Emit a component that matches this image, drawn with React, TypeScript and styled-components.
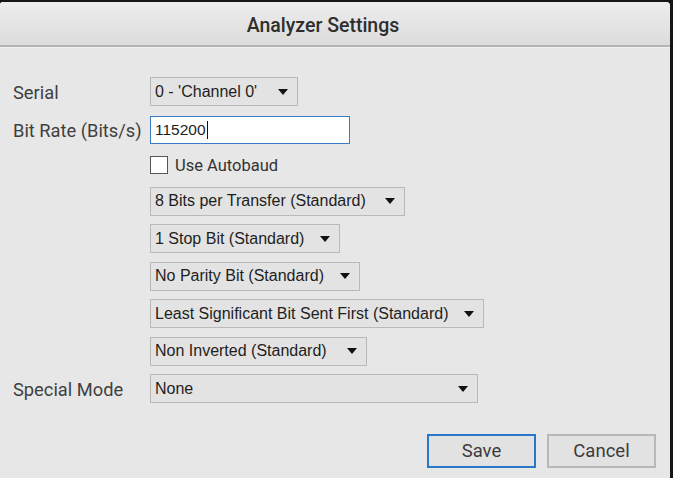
import React from "react";
import styled, { createGlobalStyle } from "styled-components";

const Global = createGlobalStyle`
  html, body { margin: 0; padding: 0; background: #161616; }
  body { width: 673px; height: 478px; overflow: hidden; }
  #root { width: 673px; height: 478px; }
`;

const Window = styled.div`
  box-sizing: border-box;
  margin-top: 2px;
  width: 670px;
  height: 476px;
  background: #e7e7e7;
  border-top-left-radius: 3px;
  border-top-right-radius: 4px;
  display: flex;
  flex-direction: column;
  overflow: hidden;
`;

const TitleBar = styled.div`
  box-sizing: border-box;
  height: 45px;
  flex: none;
  display: flex;
  align-items: center;
  justify-content: center;
  padding: 3px 24px 0 0;
  background: linear-gradient(#ededed, #dcdcdc);
  border-bottom: 2px solid #b4b4b4;
  box-shadow: 0 1px 0 #f2f2f2;
  font-family: Roboto, "Liberation Sans", sans-serif;
  font-weight: 500;
  font-size: 19.5px;
  color: #2e2e2e;
`;

const Body = styled.div`
  flex: 1;
  display: flex;
  flex-direction: column;
  padding: 30px 14px 0 13px;
`;

const Form = styled.div`
  display: grid;
  grid-template-columns: 137px 1fr;
  row-gap: 8.5px;
`;

const Label = styled.div`
  display: flex;
  align-items: center;
  padding-top: 2px;
  font-family: Roboto, "Liberation Sans", sans-serif;
  font-size: 18.3px;
  color: #3f3f3f;
  white-space: nowrap;
`;

const Cell = styled.div<{ $h?: number }>`
  grid-column: 2;
  display: flex;
  align-items: center;
  height: ${(p) => p.$h ?? 29}px;
`;

const Combo = styled.div<{ $w: number }>`
  box-sizing: border-box;
  width: ${(p) => p.$w}px;
  height: 29px;
  display: flex;
  align-items: center;
  justify-content: space-between;
  padding: 0 9px 0 4px;
  background: #e3e3e3;
  border: 1px solid #b9b9b9;
  font-family: "Liberation Sans", Arial, sans-serif;
  font-size: 16px;
  color: #1e1e1e;
  white-space: nowrap;
`;

const Arrow = styled.span`
  width: 0;
  height: 0;
  border-left: 5px solid transparent;
  border-right: 5px solid transparent;
  border-top: 6px solid #111;
  margin-left: 12px;
`;

const TextInput = styled.div`
  box-sizing: border-box;
  align-self: flex-end;
  width: 200px;
  height: 28px;
  display: flex;
  align-items: center;
  padding-left: 4px;
  background: #fff;
  border: 1px solid #3b7cc6;
  font-family: "Liberation Sans", Arial, sans-serif;
  font-size: 15.5px;
  color: #1e1e1e;
`;

const Caret = styled.span`
  display: inline-block;
  width: 1px;
  height: 18px;
  background: #111;
  margin-left: 1px;
`;

const CheckRow = styled.label`
  display: flex;
  align-items: center;
  gap: 7px;
  font-family: Roboto, "Liberation Sans", sans-serif;
  font-size: 16.5px;
  color: #333;
`;

const Box = styled.span`
  box-sizing: border-box;
  width: 18px;
  height: 18px;
  background: #fff;
  border: 1px solid #555;
`;

const Buttons = styled.div`
  display: flex;
  justify-content: flex-end;
  gap: 11px;
  margin-top: 31px;
`;

const Button = styled.div<{ $primary?: boolean }>`
  box-sizing: border-box;
  width: 109px;
  height: 34px;
  display: flex;
  align-items: center;
  justify-content: center;
  background: #e2e2e2;
  border: ${(p) => (p.$primary ? "2px solid #2a76c9" : "2px solid #b8b8b8")};
  font-family: Roboto, "Liberation Sans", sans-serif;
  font-size: 18.5px;
  color: #3c3c3c;
`;

const combos: { text: string; w: number }[] = [
  { text: "8 Bits per Transfer (Standard)", w: 255 },
  { text: "1 Stop Bit (Standard)", w: 190 },
  { text: "No Parity Bit (Standard)", w: 210 },
  { text: "Least Significant Bit Sent First (Standard)", w: 334 },
  { text: "Non Inverted (Standard)", w: 217 },
];

export default function App() {
  return (
    <>
      <Global />
      <Window>
        <TitleBar>Analyzer Settings</TitleBar>
        <Body>
          <Form>
            <Label>Serial</Label>
            <Cell>
              <Combo $w={148}>
                0 - 'Channel 0'
                <Arrow />
              </Combo>
            </Cell>
            <Label>Bit Rate (Bits/s)</Label>
            <Cell>
              <TextInput>
                115200
                <Caret />
              </TextInput>
            </Cell>
            <Cell $h={26}>
              <CheckRow>
                <Box />
                Use Autobaud
              </CheckRow>
            </Cell>
            {combos.map((c) => (
              <Cell key={c.text}>
                <Combo $w={c.w}>
                  {c.text}
                  <Arrow />
                </Combo>
              </Cell>
            ))}
            <Label>Special Mode</Label>
            <Cell>
              <Combo $w={328}>
                None
                <Arrow />
              </Combo>
            </Cell>
          </Form>
          <Buttons>
            <Button $primary>Save</Button>
            <Button>Cancel</Button>
          </Buttons>
        </Body>
      </Window>
    </>
  );
}
